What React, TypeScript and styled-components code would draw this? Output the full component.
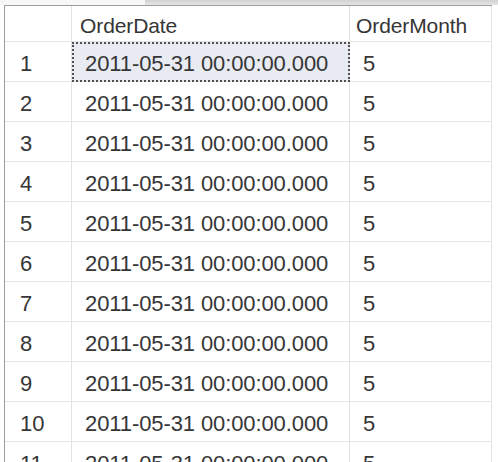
import React from "react";
import styled, { createGlobalStyle } from "styled-components";

const Global = createGlobalStyle`
  html, body { margin: 0; padding: 0; background: #ffffff; }
  body { font-family: "Liberation Sans", Arial, sans-serif; overflow: hidden; }
`;

const Page = styled.div`
  width: 498px;
  height: 462px;
  overflow: hidden;
  position: relative;
  display: flex;
  flex-direction: column;
`;

const TopStrip = styled.div`
  height: 8px;
  display: flex;
  flex-direction: row;
`;

const StripBlank = styled.div`
  width: 145px;
  background: #f7f7f7;
`;

const StripBar = styled.div`
  flex: 1;
  height: 5px;
  background: linear-gradient(#d2d2d2, #e4e4e4);
`;

const GridWrap = styled.div`
  padding-left: 4px;
`;

const Grid = styled.div`
  display: grid;
  grid-template-columns: 67px 278px 142px;
  grid-auto-rows: 40px;
  grid-template-rows: 36px;
  border-left: 1px solid #9c9c9c;
  border-top: 1px solid #9c9c9c;
  width: max-content;
`;

const Cell = styled.div<{ $header?: boolean; $pad?: number; $selected?: boolean }>`
  box-sizing: border-box;
  display: flex;
  align-items: center;
  padding-left: ${(p) => p.$pad ?? 13}px;
  border-right: 1px solid #e2e2e2;
  border-bottom: 1px solid #e6e6e6;
  font-size: ${(p) => (p.$header ? 21 : 22)}px;
  color: ${(p) => (p.$header ? "#353535" : "#363636")};
  white-space: nowrap;
  position: relative;
  background: ${(p) => (p.$selected ? "#e9ebf2" : "#ffffff")};
  padding-top: ${(p) => (p.$header ? 4 : 5)}px;
  letter-spacing: -0.1px;
  ${(p) =>
    p.$selected
      ? `outline: 2px dotted #505050; outline-offset: -2px;`
      : ""}
`;

const rows = Array.from({ length: 11 }, (_, i) => i + 1);

export default function App() {
  return (
    <Page>
      <Global />
      <TopStrip>
        <StripBlank />
        <StripBar />
      </TopStrip>
      <GridWrap>
        <Grid>
          <Cell $header />
          <Cell $header $pad={8}>OrderDate</Cell>
          <Cell $header $pad={6}>OrderMonth</Cell>
          {rows.map((n) => (
            <React.Fragment key={n}>
              <Cell $pad={15}>{n}</Cell>
              <Cell $selected={n === 1}>2011-05-31 00:00:00.000</Cell>
              <Cell>5</Cell>
            </React.Fragment>
          ))}
        </Grid>
      </GridWrap>
    </Page>
  );
}
